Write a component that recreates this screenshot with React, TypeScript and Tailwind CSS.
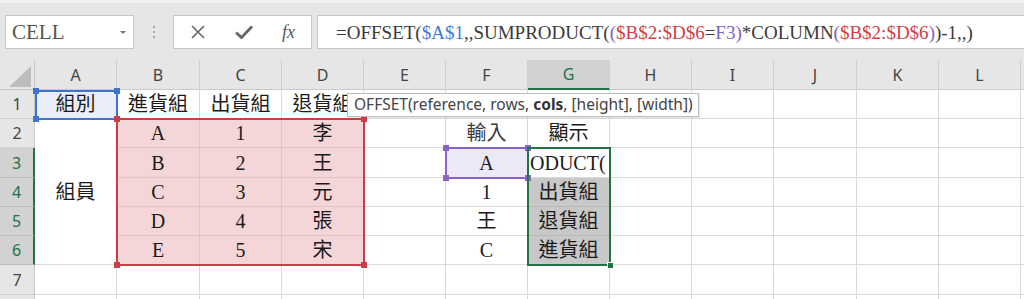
import React from "react";

const SERIF = "font-['Liberation_Serif','Noto_Sans_CJK_TC',serif]";

const letters = ["A", "B", "C", "D", "E", "F", "G", "H", "I", "J", "K", "L", ""];

type Cell = { t?: string; cls?: string; span?: boolean };

function Formula() {
  const dark = "text-[#3a3a3a]";
  return (
    <span className={`${SERIF} text-[19px] leading-none whitespace-nowrap`}>
      <span className={dark}>=OFFSET(</span>
      <span className="text-[#3f7bd6]">$A$1</span>
      <span className={dark}>,,SUMPRODUCT(</span>
      <span className="text-[#8a5cc8]">(</span>
      <span className="text-[#d0414c]">$B$2:$D$6</span>
      <span className={dark}>=</span>
      <span className="text-[#7b63d0]">F3</span>
      <span className="text-[#8a5cc8]">)</span>
      <span className={dark}>*COLUMN</span>
      <span className="text-[#8a5cc8]">(</span>
      <span className="text-[#d0414c]">$B$2:$D$6</span>
      <span className="text-[#8a5cc8]">)</span>
      <span className={dark}>)-1,,)</span>
    </span>
  );
}

function TopBar() {
  return (
    <div className="h-[60px] bg-[#e6e6e6] border-t-[3px] border-[#f1f1f1] flex items-start pt-[12px]">
      <div className="ml-[5px] w-[129px] h-[34px] bg-white border border-[#c6c6c6] flex items-center pl-[6px] pr-[6px] justify-between">
        <span className={`${SERIF} text-[21px] text-[#555] leading-none`}>CELL</span>
        <span className="w-0 h-0 border-l-[3px] border-r-[3px] border-t-[3px] border-l-transparent border-r-transparent border-t-[#777] mr-[1px]" />
      </div>
      <div className="ml-[18px] w-[3px] h-[34px] flex flex-col items-center justify-center gap-[3px]">
        <span className="w-[2px] h-[2px] bg-[#a6a6a6]" />
        <span className="w-[2px] h-[2px] bg-[#a6a6a6]" />
        <span className="w-[2px] h-[2px] bg-[#a6a6a6]" />
      </div>
      <div className="ml-[18px] w-[139px] h-[34px] bg-white border border-[#c6c6c6] flex items-center">
        <svg width="16" height="16" viewBox="0 0 16 16" className="ml-[16px]">
          <path d="M2 2 L14 14 M14 2 L2 14" stroke="#666" strokeWidth="1.6" fill="none" />
        </svg>
        <svg width="20" height="16" viewBox="0 0 20 16" className="ml-[28px]">
          <path d="M2 8.5 L7.5 13.5 L18 2.5" stroke="#666" strokeWidth="2.8" fill="none" />
        </svg>
        <span className={`${SERIF} italic text-[18px] text-[#555] ml-[28px] leading-none`}>fx</span>
      </div>
      <div className="ml-[5px] flex-1 h-[34px] bg-white border border-r-0 border-[#c6c6c6] flex items-center pl-[18px] overflow-hidden">
        <Formula />
      </div>
    </div>
  );
}

export default function App() {
  const rowsData: Cell[][] = [
    [
      { t: "組別", cls: "bg-[#e9eef8]" },
      { t: "進貨組" },
      { t: "出貨組" },
      { t: "退貨組" },
      {}, {}, {}, {}, {}, {}, {}, {}, {},
    ],
    [
      { t: "組員", span: true },
      { t: "A", cls: "pink" },
      { t: "1", cls: "pink" },
      { t: "李", cls: "pink" },
      {},
      { t: "輸入", cls: "text-[#3a3a3a]" },
      { t: "顯示" },
      {}, {}, {}, {}, {}, {},
    ],
    [
      { t: "B", cls: "pink" },
      { t: "2", cls: "pink" },
      { t: "王", cls: "pink" },
      {},
      { t: "A", cls: "bg-[#ece8f6]" },
      { t: "ODUCT(", cls: "odu" },
      {}, {}, {}, {}, {}, {},
    ],
    [
      { t: "C", cls: "pink" },
      { t: "3", cls: "pink" },
      { t: "元", cls: "pink" },
      {},
      { t: "1" },
      { t: "出貨組", cls: "gray" },
      {}, {}, {}, {}, {}, {},
    ],
    [
      { t: "D", cls: "pink" },
      { t: "4", cls: "pink" },
      { t: "張", cls: "pink" },
      {},
      { t: "王" },
      { t: "退貨組", cls: "gray" },
      {}, {}, {}, {}, {}, {},
    ],
    [
      { t: "E", cls: "pink" },
      { t: "5", cls: "pink" },
      { t: "宋", cls: "pink" },
      {},
      { t: "C" },
      { t: "進貨組", cls: "gray" },
      {}, {}, {}, {}, {}, {},
    ],
    [{}, {}, {}, {}, {}, {}, {}, {}, {}, {}, {}, {}, {}],
    [{}, {}, {}, {}, {}, {}, {}, {}, {}, {}, {}, {}, {}],
  ];

  const selectedRows = [3, 4, 5, 6];

  const cellClass = (c: Cell) => {
    const base = `flex items-center justify-center border-r border-b ${SERIF} text-[20px] text-[#1a1a1a] leading-none overflow-hidden whitespace-nowrap`;
    if (c.cls === "pink") return `${base} bg-[#f4d6d9] border-[#e4c1c4]`;
    if (c.cls === "gray") return `${base} bg-[#c8c8c8] border-[#b9b9b9]`;
    if (c.cls === "odu") return `${base} bg-white border-[#dadada] !justify-start pl-[2px]`;
    if (c.span) return `${base} row-span-5 bg-white border-[#dadada]`;
    return `${base} border-[#dadada] ${c.cls ?? "bg-white"}`;
  };

  const handle = "absolute w-[6px] h-[6px]";

  return (
    <div className="relative w-[1024px] h-[299px] overflow-hidden bg-white">
      <TopBar />
      <div className="grid grid-cols-[35px_82px_83px_82px_82px_82px_82px_82px_82px_82px_83px_82px_82px_82px] grid-rows-[30px_29px_29px_30px_29px_29px_29px_30px_29px] w-[1100px]">
        {/* header row */}
        <div className="bg-[#e6e6e6] border-r border-b border-[#c9c9c9] flex items-end justify-end pr-[2px] pb-[1px]">
          <svg width="24" height="22" viewBox="0 0 24 22">
            <path d="M23 0 L23 21 L1 21 Z" fill="#bdbdbd" />
          </svg>
        </div>
        {letters.map((l, i) => (
          <div
            key={"h" + i}
            className={`flex items-center justify-center font-['Noto_Sans','Liberation_Sans',sans-serif] text-[16px] border-r border-[#cfcfcf] ${
              l === "G"
                ? "bg-[#d2d2d2] text-[#217346] border-b-2 border-b-[#217346]"
                : "bg-[#e6e6e6] text-[#444] border-b border-b-[#c9c9c9]"
            }`}
          >
            {l}
          </div>
        ))}
        {rowsData.map((row, ri) => {
          const rn = ri + 1;
          const sel = selectedRows.includes(rn);
          return (
            <React.Fragment key={"r" + ri}>
              <div
                className={`flex items-center justify-center font-['Noto_Sans','Liberation_Sans',sans-serif] text-[16px] border-b ${
                  sel
                    ? "bg-[#d2d2d2] text-[#217346] border-r-2 border-r-[#217346] border-b-[#bdbdbd]"
                    : "bg-[#e6e6e6] text-[#444] border-r border-r-[#c9c9c9] border-b-[#cfcfcf]"
                }`}
              >
                {rn <= 7 ? rn : ""}
              </div>
              {row.map((c, ci) => (
                <div key={"c" + ri + "-" + ci} className={cellClass(c)}>
                  {c.t}
                </div>
              ))}
            </React.Fragment>
          );
        })}
      </div>

      {/* A1 blue range */}
      <div className="absolute left-[35px] top-[90px] w-[83px] h-[30px] border-2 border-[#3f73d0] pointer-events-none">
        <span className={`${handle} bg-[#3f73d0] -left-[4px] -top-[4px]`} />
        <span className={`${handle} bg-[#3f73d0] -right-[4px] -top-[4px]`} />
        <span className={`${handle} bg-[#3f73d0] -left-[4px] -bottom-[4px]`} />
      </div>
      {/* B2:D6 red range */}
      <div className="absolute left-[116px] top-[118px] w-[249px] h-[148px] border-2 border-[#cc3d4a] pointer-events-none">
        <span className={`${handle} bg-[#cc3d4a] -left-[4px] -top-[4px]`} />
        <span className={`${handle} bg-[#cc3d4a] -right-[4px] -top-[4px]`} />
        <span className={`${handle} bg-[#cc3d4a] -left-[4px] -bottom-[4px]`} />
        <span className={`${handle} bg-[#cc3d4a] -right-[4px] -bottom-[4px]`} />
      </div>
      {/* F3 purple range */}
      <div className="absolute left-[445px] top-[147px] w-[84px] h-[32px] border-2 border-[#8a62cc] pointer-events-none">
        <span className={`${handle} bg-[#8a62cc] -left-[4px] -top-[4px]`} />
        <span className={`${handle} bg-[#8a62cc] -right-[4px] -top-[4px]`} />
        <span className={`${handle} bg-[#8a62cc] -left-[4px] -bottom-[4px]`} />
        <span className={`${handle} bg-[#8a62cc] -right-[4px] -bottom-[4px]`} />
      </div>
      {/* G3:G6 green selection */}
      <div className="absolute left-[527px] top-[147px] w-[84px] h-[119px] border-2 border-[#217346] pointer-events-none">
        <span className="absolute w-[7px] h-[7px] bg-[#217346] border border-white -right-[5px] -bottom-[5px]" />
      </div>

      {/* tooltip */}
      <div className="absolute left-[347px] top-[93px] w-[352px] h-[24px] bg-white border border-[#bcbcbc] flex items-center pl-[6px] font-['Noto_Sans','Liberation_Sans',sans-serif] text-[15.5px] text-[#444] whitespace-nowrap shadow-[1px_1px_1px_rgba(0,0,0,0.08)]">
        <span>
          OFFSET(reference, rows, <b className="font-bold text-[#333]">cols</b>, [height], [width])
        </span>
      </div>
    </div>
  );
}
